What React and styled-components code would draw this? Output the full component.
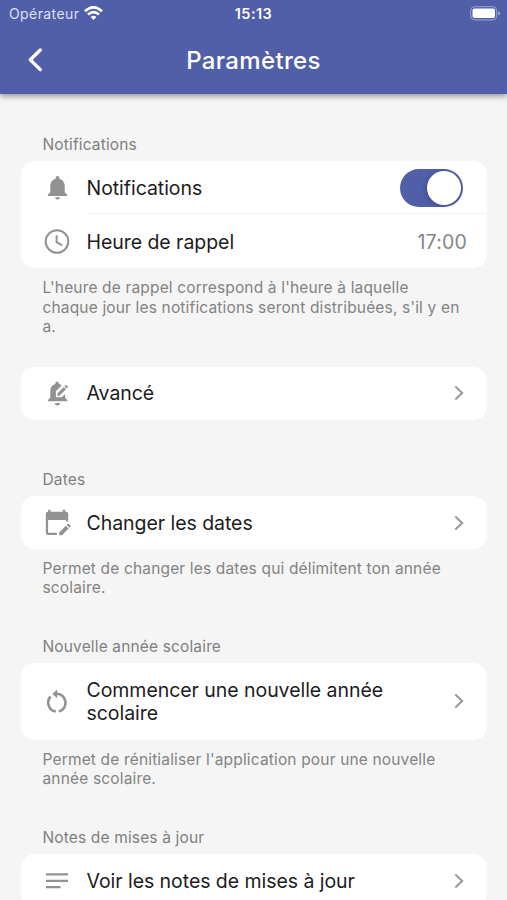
import React from "react";
import styled, { createGlobalStyle } from "styled-components";
import { MdNotifications } from "react-icons/md";

const GlobalStyle = createGlobalStyle`
  * { box-sizing: border-box; }
  body { margin: 0; background: #f5f5f5; font-family: Inter, sans-serif; overflow: hidden; }
`;

const Screen = styled.div`
  width: 507px;
  height: 900px;
  overflow: hidden;
  background: #f5f5f5;
`;

const Header = styled.header`
  height: 94px;
  background: #515ea8;
  color: #fff;
  box-shadow: 0 2px 6px rgba(0, 0, 0, 0.42);
`;

const StatusBar = styled.div`
  display: grid;
  grid-template-columns: 1fr auto 1fr;
  align-items: center;
  height: 27px;
  padding: 0 6px 0 9px;
`;

const Carrier = styled.div`
  display: flex;
  align-items: center;
  gap: 5px;
  font-size: 14px;
  letter-spacing: 0.4px;
  color: #dde0f4;
`;

const Clock = styled.div`
  margin-right: 3px;
  font-size: 14.5px;
  font-weight: 600;
  letter-spacing: 0.45px;
`;

const Battery = styled.div`
  display: flex;
  justify-content: flex-end;
`;

const NavBar = styled.div`
  display: grid;
  grid-template-columns: 60px 1fr 60px;
  align-items: center;
  height: 66px;
`;

const BackButton = styled.button`
  display: flex;
  align-items: center;
  height: 44px;
  padding: 0 0 0 25.5px;
  border: 0;
  background: none;
  color: inherit;
`;

const Title = styled.h1`
  margin: 0;
  text-align: center;
  font-size: 24px;
  font-weight: 500;
  letter-spacing: 0.35px;
`;

const Content = styled.main`
  padding: 40px 20px 0 21px;
`;

const Section = styled.section`
  margin-bottom: ${(p) => p.$gap}px;
`;

const SectionLabel = styled.h2`
  margin: 0;
  padding-left: 21.5px;
  height: 27px;
  line-height: 21px;
  font-size: 15.5px;
  font-weight: 400;
  letter-spacing: 0.15px;
  color: #7f7f7f;
`;

const Card = styled.div`
  background: #fff;
  border-radius: 14px;
  overflow: hidden;
`;

const Row = styled.div`
  display: flex;
  align-items: center;
  height: ${(p) => p.$height || 53}px;
`;

const IconSlot = styled.div`
  display: flex;
  justify-content: center;
  width: 31px;
  margin-left: 20.5px;
  color: #929292;
`;

const RowBody = styled.div`
  flex: 1;
  display: flex;
  align-items: center;
  justify-content: space-between;
  height: 100%;
  margin-left: 14px;
  padding-top: ${(p) => p.$top || 0}px;
  padding-right: ${(p) => p.$end || 23}px;
  border-bottom: ${(p) => (p.$divided ? "1px solid #f2f2f2" : "0")};
`;

const RowTitle = styled.div`
  max-width: 320px;
  padding-top: 1px;
  font-size: 19.5px;
  line-height: 23px;
  letter-spacing: -0.05px;
  color: #1c1c1c;
`;

const Value = styled.div`
  font-size: 19.5px;
  letter-spacing: 0.2px;
  color: #858585;
`;

const Switch = styled.div`
  display: flex;
  justify-content: flex-end;
  width: 63px;
  height: 38px;
  padding: 2px;
  border-radius: 19px;
  background: #515ea8;
`;

const Knob = styled.div`
  width: 34px;
  height: 34px;
  border-radius: 50%;
  background: #fff;
  box-shadow: -2px 1px 4px rgba(0, 0, 0, 0.15);
`;

const Note = styled.p`
  margin: 0;
  padding: 10px 0 0 21.5px;
  font-size: 15.5px;
  line-height: 19.5px;
  letter-spacing: 0.16px;
  color: #838383;
`;

const Chevron = () => (
  <svg width="10" height="16" viewBox="0 0 10 16" fill="none" stroke="#999" strokeWidth="2">
    <path d="M1.3 1.5 8.2 8 1.3 14.5" />
  </svg>
);

const WifiIcon = () => (
  <svg width="19" height="15" viewBox="0 0 19 15" fill="none" stroke="#fff" strokeWidth="2.7">
    <path d="M1 5.2Q9.5-2.4 18 5.2" />
    <path d="M4 8.5Q9.5 3.7 15 8.5" />
    <path d="M9.5 14 6.6 11Q9.5 8.5 12.4 11Z" fill="#fff" stroke="none" />
  </svg>
);

const BatteryIcon = () => (
  <svg width="31" height="15" viewBox="0 0 31 15">
    <rect x="0.7" y="0.7" width="26" height="13.2" rx="4" fill="none" stroke="#9da5d3" />
    <rect x="2.5" y="2.5" width="22.5" height="9.6" rx="2" fill="#fff" />
    <path d="M28.2 5v4.6q2-.8 2-2.3t-2-2.3" fill="#9da5d3" />
  </svg>
);

const BackIcon = () => (
  <svg width="18" height="26" viewBox="0 0 18 26" fill="none" stroke="#fff" strokeWidth="3.4" strokeLinecap="round" strokeLinejoin="round">
    <path d="M14.3 3 4.3 12.7l10 9.9" />
  </svg>
);

const TimeIcon = () => (
  <svg width="26" height="26" viewBox="0 0 26 26" fill="none" stroke="currentColor" strokeWidth="2">
    <circle cx="13" cy="13.5" r="11.3" />
    <path d="M12.6 7.3v6.8l5.6 3.4" />
  </svg>
);

const BellEditIcon = () => (
  <svg width="24" height="26" viewBox="0 0 24 26" fill="currentColor">
    <path d="M3 21.3v-1.2l2.3-2.3v-6.6c0-3.7 1.9-6.3 5-7.1v-.9a1.8 1.8 0 0 1 3.6 0v.9q1.7.4 2.8 1.4l-5.8 5.8v6h5.8l3.4-3.4v3.9l2.3 2.3v1.2z" />
    <path d="M10 23h5a2.5 2.5 0 0 1-5 0z" />
    <path d="M12.3 15.8v-2.3l6.5-6.5 2.2 2.2-6.5 6.6zM19.5 6.3l1-1q.5-.4 1 0l1.2 1.2q.4.5 0 1l-1 1z" />
  </svg>
);

const CalendarEditIcon = () => (
  <svg width="28" height="28" viewBox="0 0 28 28" fill="currentColor">
    <path d="M5.2 1.7h2.4v2h12.2v-2h2.4v2h.6q2.4 0 2.4 2.4v7.4h-2.3v-1.6H5.1v12.2q0 .7.7.7h8v2.3H5.2q-2.4 0-2.4-2.4V6.1q0-2.4 2.4-2.4z" />
    <path d="M16.2 27.2v-2.8l6.6-6.6 2.8 2.8-6.6 6.6zM23.7 16.9l1-1q.6-.5 1.1 0l1.7 1.7q.5.6 0 1.1l-1 1z" />
  </svg>
);

const RestartIcon = () => (
  <svg width="24" height="26" viewBox="0 0 24 26" fill="none" stroke="currentColor" strokeWidth="2.6">
    <path d="M10.8 23.5A9 9 0 0 1 5.6 8.5" />
    <path d="M13.8 23.5A9 9 0 0 0 12 5.8H10" />
    <path d="M12.1 1.5v8.8L7.4 5.9Z" fill="currentColor" stroke="none" />
  </svg>
);

const NotesIcon = () => (
  <svg width="24" height="18" viewBox="0 0 24 18" fill="none" stroke="currentColor" strokeWidth="2.3">
    <path d="M1 2.3h22M1 8.8h22M1 15.2h14.6" />
  </svg>
);

const LinkRow = ({ icon, height, top, children }) => (
  <Row $height={height}>
    <IconSlot>{icon}</IconSlot>
    <RowBody $top={top}>
      <RowTitle>{children}</RowTitle>
      <Chevron />
    </RowBody>
  </Row>
);

export default function App() {
  return (
    <Screen>
      <GlobalStyle />
      <Header>
        <StatusBar>
          <Carrier>Opérateur <WifiIcon /></Carrier>
          <Clock>15:13</Clock>
          <Battery><BatteryIcon /></Battery>
        </StatusBar>
        <NavBar>
          <BackButton aria-label="Retour"><BackIcon /></BackButton>
          <Title>Paramètres</Title>
        </NavBar>
      </Header>
      <Content>
        <Section $gap={30}>
          <SectionLabel>Notifications</SectionLabel>
          <Card>
            <Row $height={53}>
              <IconSlot><MdNotifications size={29} /></IconSlot>
              <RowBody $divided $end={24} $top={2}>
                <RowTitle>Notifications</RowTitle>
                <Switch role="switch" aria-checked="true"><Knob /></Switch>
              </RowBody>
            </Row>
            <Row $height={54}>
              <IconSlot><TimeIcon /></IconSlot>
              <RowBody $end={20} $top={1}>
                <RowTitle>Heure de rappel</RowTitle>
                <Value>17:00</Value>
              </RowBody>
            </Row>
          </Card>
          <Note>
            L'heure de rappel correspond à l'heure à laquelle<br />
            chaque jour les notifications seront distribuées, s'il y en<br />
            a.
          </Note>
        </Section>
        <Section $gap={49}>
          <Card>
            <LinkRow icon={<BellEditIcon />}>Avancé</LinkRow>
          </Card>
        </Section>
        <Section $gap={38}>
          <SectionLabel>Dates</SectionLabel>
          <Card>
            <LinkRow top={1} icon={<CalendarEditIcon />}>Changer les dates</LinkRow>
          </Card>
          <Note>
            Permet de changer les dates qui délimitent ton année<br />
            scolaire.
          </Note>
        </Section>
        <Section $gap={38}>
          <SectionLabel>Nouvelle année scolaire</SectionLabel>
          <Card>
            <LinkRow height={77} icon={<RestartIcon />}>
              Commencer une nouvelle année<br />scolaire
            </LinkRow>
          </Card>
          <Note>
            Permet de rénitialiser l'application pour une nouvelle<br />
            année scolaire.
          </Note>
        </Section>
        <Section $gap={0}>
          <SectionLabel>Notes de mises à jour</SectionLabel>
          <Card>
            <LinkRow height={54} icon={<NotesIcon />}>Voir les notes de mises à jour</LinkRow>
          </Card>
        </Section>
      </Content>
    </Screen>
  );
}
